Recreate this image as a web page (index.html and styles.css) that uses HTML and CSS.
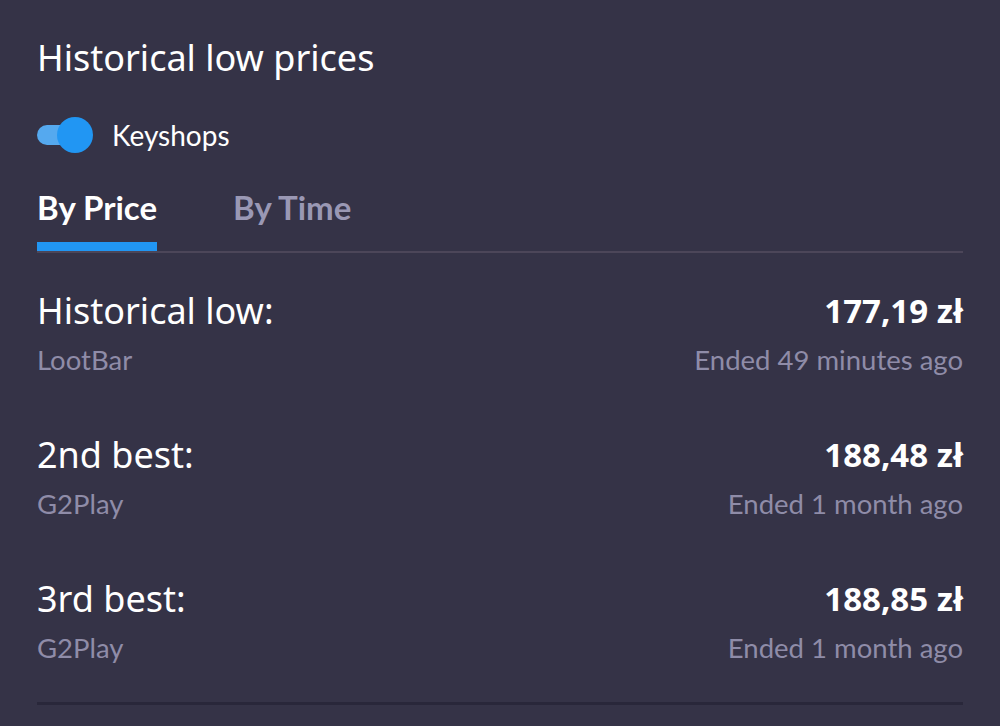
FILE: index.html
```html
<!DOCTYPE html>
<html>
<head>
<meta charset="utf-8">
<link rel="stylesheet" href="styles.css">
</head>
<body>
<div class="card">
  <h2 class="title">Historical low prices</h2>
  <div class="toggle-row">
    <span class="toggle"><span class="track"></span><span class="thumb"></span></span>
    <span class="toggle-label">Keyshops</span>
  </div>
  <div class="tabs">
    <div class="tab active">By Price</div>
    <div class="tab">By Time</div>
  </div>
  <div class="rows">
    <div class="row">
      <div class="left">
        <div class="label">Historical low:</div>
        <div class="shop">LootBar</div>
      </div>
      <div class="right">
        <div class="price">177,19 zł</div>
        <div class="ended">Ended 49 minutes ago</div>
      </div>
    </div>
    <div class="row">
      <div class="left">
        <div class="label">2nd best:</div>
        <div class="shop">G2Play</div>
      </div>
      <div class="right">
        <div class="price">188,48 zł</div>
        <div class="ended">Ended 1 month ago</div>
      </div>
    </div>
    <div class="row">
      <div class="left">
        <div class="label">3rd best:</div>
        <div class="shop">G2Play</div>
      </div>
      <div class="right">
        <div class="price">188,85 zł</div>
        <div class="ended">Ended 1 month ago</div>
      </div>
    </div>
  </div>
  <div class="divider"></div>
</div>
</body>
</html>
```
FILE: styles.css
```css
html, body {
  margin: 0;
  padding: 0;
  background: #353347;
  height: 100%;
  overflow: hidden;
}
body {
  font-family: "Noto Sans", sans-serif;
  color: #ffffff;
}
.card {
  padding: 30px 37px 0 37px;
}
.title {
  margin: 0;
  font-family: "Noto Sans", sans-serif;
  font-weight: 400;
  font-size: 36px;
  line-height: 56px;
  color: #fff;
}
.toggle-row {
  display: flex;
  align-items: center;
  margin-top: 29px;
  height: 40px;
}
.toggle {
  position: relative;
  width: 56px;
  height: 36px;
  display: inline-block;
}
.track {
  position: absolute;
  left: 0;
  top: 8px;
  width: 46px;
  height: 20px;
  border-radius: 10px;
  background: #55a9ef;
}
.thumb {
  position: absolute;
  left: 20px;
  top: 0;
  width: 36px;
  height: 36px;
  border-radius: 50%;
  background: #2196f3;
}
.toggle-label {
  margin-left: 19px;
  font-family: "Lato", sans-serif;
  font-size: 28px;
  color: #fff;
}
.tabs {
  display: flex;
  gap: 76px;
  margin-top: 34px;
  border-bottom: 2px solid #4c4659;
}
.tab {
  font-family: "Lato", sans-serif;
  font-weight: 700;
  font-size: 33px;
  line-height: 36px;
  padding: 0 0 26px 0;
  color: #9a98b4;
  position: relative;
}
.tab.active {
  color: #fff;
}
.tab.active::after {
  content: "";
  position: absolute;
  left: 0;
  right: 0;
  bottom: 0;
  height: 9px;
  background: #2196f3;
}
.rows {
  display: flex;
  flex-direction: column;
  padding-top: 35px;
}
.row {
  display: flex;
  justify-content: space-between;
  height: 144px;
}
.label {
  font-family: "Noto Sans", sans-serif;
  font-size: 36px;
  line-height: 46px;
  color: #fff;
}
.shop, .ended {
  font-family: "Lato", sans-serif;
  font-size: 27.5px;
  line-height: 40px;
  margin-top: 6px;
  color: #8f8ca8;
}
.right {
  text-align: right;
}
.price {
  font-family: "Noto Sans", sans-serif;
  font-weight: 700;
  font-size: 33px;
  line-height: 46px;
  color: #fff;
}
.divider {
  height: 3px;
  background: #29273a;
  margin-top: -18px;
}
```
